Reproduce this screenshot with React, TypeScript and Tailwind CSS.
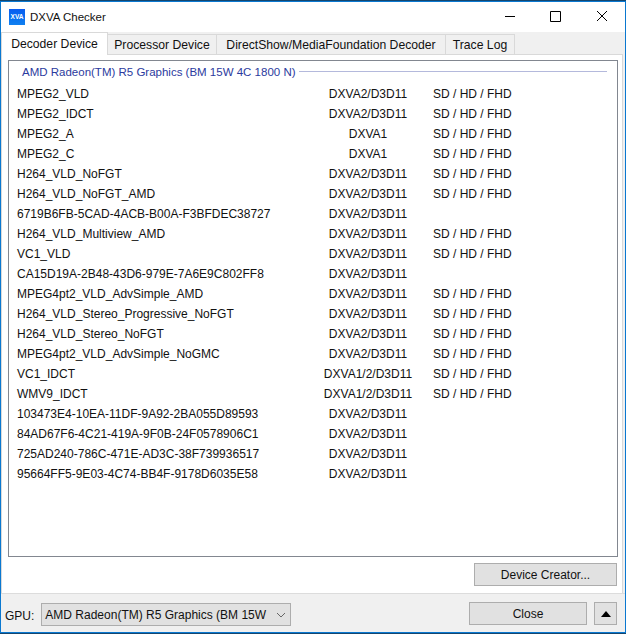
import React from "react";

const ROWS: [string, string, boolean][] = [
  ["MPEG2_VLD", "DXVA2/D3D11", true],
  ["MPEG2_IDCT", "DXVA2/D3D11", true],
  ["MPEG2_A", "DXVA1", true],
  ["MPEG2_C", "DXVA1", true],
  ["H264_VLD_NoFGT", "DXVA2/D3D11", true],
  ["H264_VLD_NoFGT_AMD", "DXVA2/D3D11", true],
  ["6719B6FB-5CAD-4ACB-B00A-F3BFDEC38727", "DXVA2/D3D11", false],
  ["H264_VLD_Multiview_AMD", "DXVA2/D3D11", true],
  ["VC1_VLD", "DXVA2/D3D11", true],
  ["CA15D19A-2B48-43D6-979E-7A6E9C802FF8", "DXVA2/D3D11", false],
  ["MPEG4pt2_VLD_AdvSimple_AMD", "DXVA2/D3D11", true],
  ["H264_VLD_Stereo_Progressive_NoFGT", "DXVA2/D3D11", true],
  ["H264_VLD_Stereo_NoFGT", "DXVA2/D3D11", true],
  ["MPEG4pt2_VLD_AdvSimple_NoGMC", "DXVA2/D3D11", true],
  ["VC1_IDCT", "DXVA1/2/D3D11", true],
  ["WMV9_IDCT", "DXVA1/2/D3D11", true],
  ["103473E4-10EA-11DF-9A92-2BA055D89593", "DXVA2/D3D11", false],
  ["84AD67F6-4C21-419A-9F0B-24F0578906C1", "DXVA2/D3D11", false],
  ["725AD240-786C-471E-AD3C-38F739936517", "DXVA2/D3D11", false],
  ["95664FF5-9E03-4C74-BB4F-9178D6035E58", "DXVA2/D3D11", false],
];

const TABS = [
  { label: "Decoder Device", active: true, w: "w-[107px]" },
  { label: "Processor Device", active: false, w: "w-[109px]" },
  { label: "DirectShow/MediaFoundation Decoder", active: false, w: "w-[229px]" },
  { label: "Trace Log", active: false, w: "w-[69px]" },
];

export default function App() {
  return (
    <div className="w-[626px] h-[634px] flex flex-col bg-[#14466e] font-['Liberation_Sans',Arial,sans-serif] text-[12px] text-[#111] overflow-hidden">
      <div className="flex-1 mt-px mb-px flex flex-col border-x border-y border-[#0a78d0] min-h-0">
        {/* title bar */}
        <div className="h-[30px] shrink-0 flex items-center pl-2 bg-white">
          <div className="w-4 h-4 bg-gradient-to-b from-[#0a5cf0] to-[#1080f0] text-white text-[6.5px] font-bold flex items-center justify-center">
            XVA
          </div>
          <span className="ml-[5px] mt-[2px] text-[11.5px]">DXVA Checker</span>
          <div className="ml-auto flex items-center">
            <svg width="46" height="30" viewBox="0 0 46 30">
              <path d="M18 14.5h10" stroke="#000" fill="none" />
            </svg>
            <svg width="46" height="30" viewBox="0 0 46 30">
              <path d="M17.5 9.5h10v10h-10z" stroke="#000" fill="none" />
            </svg>
            <svg width="46" height="30" viewBox="0 0 46 30">
              <path d="M18 9l10 10M28 9l-10 10" stroke="#000" fill="none" />
            </svg>
          </div>
        </div>

        {/* tabs */}
        <div className="h-[22px] shrink-0 flex items-end bg-[#f0f0f0] text-[12.2px]">
          {TABS.map((t) => (
            <div
              key={t.label}
              className={
                t.active
                  ? `${t.w} h-[23px] -mb-px z-10 pt-px bg-white border border-b-0 border-[#d9d9d9] flex items-center justify-center`
                  : `${t.w} h-[20px] pt-[2px] bg-[#f0f0f0] border border-l-0 border-b-0 border-[#d9d9d9] flex items-center justify-center`
              }
            >
              {t.label}
            </div>
          ))}
        </div>

        {/* tab page */}
        <div className="h-[539px] shrink-0 flex bg-[#f0f0f0] pr-[2px]">
          <div className="flex-1 flex flex-col bg-white border border-t border-b-0 border-[#d9d9d9] pl-[6px] pr-[4px] pt-[5px]">
            <div className="h-[497px] shrink-0 border border-[#828790] pl-[8px] pr-[10px]">
              <div className="h-[23px] flex items-center pl-[5px] text-[#2b3a9e] text-[11.5px]">
                <span className="whitespace-nowrap">AMD Radeon(TM) R5 Graphics (BM 15W 4C 1800 N)</span>
                <div className="ml-[3px] flex-1 h-px bg-[#b4b9dc] self-start mt-[10px]" />
              </div>
              <div>
                {ROWS.map(([name, api, res]) => (
                  <div key={name} className="h-5 grid grid-cols-[286px_130px_1fr] items-center whitespace-nowrap">
                    <span>{name}</span>
                    <span className="text-center">{api}</span>
                    <span>{res ? "SD / HD / FHD" : ""}</span>
                  </div>
                ))}
              </div>
            </div>
            <div className="flex justify-end pt-[6px] pr-px">
              <button className="w-[143px] h-[23px] bg-[#e1e1e1] border border-[#adadad] text-center">
                Device Creator...
              </button>
            </div>
          </div>
        </div>

        {/* bottom bar */}
        <div className="flex-1 bg-[#f0f0f0] border-t border-[#dcdcdc] flex items-start pl-[4px] pr-[8px]">
          <span className="mt-[13px]">GPU:</span>
          <div className="ml-[7px] mt-[9px] w-[250px] h-[23px] bg-[#e1e1e1] border border-[#adadad] flex items-center pl-[3px] pr-[4px] whitespace-nowrap overflow-hidden">
            <span>AMD Radeon(TM) R5 Graphics (BM 15W</span>
            <svg width="10" height="6" viewBox="0 0 10 6" className="ml-auto shrink-0">
              <path d="M1 1l4 4 4-4" stroke="#666" fill="none" />
            </svg>
          </div>
          <button className="ml-auto mt-[8px] w-[118px] h-[23px] bg-[#e1e1e1] border border-[#adadad]">Close</button>
          <button className="ml-[7px] mt-[8px] w-[23px] h-[23px] bg-[#e1e1e1] border border-[#adadad] flex items-center justify-center">
            <svg width="10" height="6" viewBox="0 0 10 6">
              <path d="M5 0l5 6H0z" fill="#000" />
            </svg>
          </button>
        </div>
      </div>
    </div>
  );
}
